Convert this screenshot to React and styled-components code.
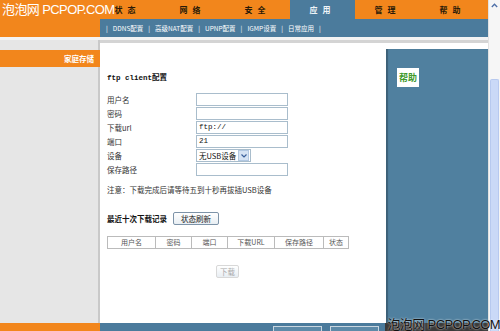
import { Fragment } from 'react'
import styled, { createGlobalStyle } from 'styled-components'

const ORANGE = '#f2861c'
const BLUE = '#4b7b9c'
const CJK = '"Noto Sans CJK SC", "Liberation Sans", sans-serif'

const Global = createGlobalStyle`
    html, body { margin: 0; padding: 0; background: #fff; }
    body { overflow: hidden; font-family: ${CJK}; }
`
const Page = styled.div`
    position: relative;
    display: flex;
    width: 500px;
    height: 331px;
    overflow: hidden;
`
const Main = styled.div`
    display: flex;
    flex-direction: column;
    width: 488px;
`
const Header = styled.div`
    display: flex;
    height: 19px;
    background: ${ORANGE};
`
const LogoSpace = styled.div`
    width: 95px;
`
const Tab = styled.div`
    width: 65px;
    display: flex;
    align-items: center;
    justify-content: center;
    font-size: 8px;
    font-weight: bold;
    letter-spacing: 5px;
    color: ${({ $active }) => ($active ? '#eef4f8' : '#2a1a08')};
    background: ${({ $active }) => ($active ? BLUE : 'transparent')};
`
const SubRow = styled.div`
    display: flex;
    height: 18px;
`
const SubLeft = styled.div`
    width: 100px;
    background: ${ORANGE};
`
const SubNav = styled.div`
    flex: 1;
    display: flex;
    align-items: center;
    gap: 5px;
    padding-left: 6px;
    background: ${BLUE};
    color: #fff;
    font-size: 6.5px;
`
const Strip = styled.div`
    height: 3px;
    background: #f3f3f3;
`
const Body = styled.div`
    flex: 1;
    display: flex;
`
const Sidebar = styled.div`
    width: 98px;
    padding-top: 10px;
    background: #e6e6e6;
    border-right: 2px solid #c9c9c9;
`
const SideItem = styled.div`
    height: 17px;
    background: ${ORANGE};
    color: #fff;
    font-size: 7.5px;
    font-weight: bold;
    display: flex;
    align-items: center;
    justify-content: flex-end;
    padding-right: 6px;
    margin-right: -2px;
`
const Work = styled.div`
    flex: 1;
    display: flex;
    flex-direction: column;
    border-top: 3px solid #d4d4d4;
`
const WorkRow = styled.div`
    flex: 1;
    display: flex;
`
const Content = styled.div`
    width: 279px;
    padding: 30px 0 0 7px;
    background: #fff;
    font-size: 7.5px;
    color: #333;
`
const Heading = styled.div`
    font-family: "Liberation Mono", ${CJK};
    font-weight: bold;
    font-size: 7.5px;
    height: 10px;
    line-height: 10px;
    margin-bottom: 10px;
    color: #111;
`
const Form = styled.div`
    display: grid;
    grid-template-columns: 89px 92px;
    row-gap: 1px;
`
const Label = styled.div`
    height: 13px;
    line-height: 13px;
`
const Input = styled.div`
    height: 11px;
    border: 1px solid #a9bdcc;
    background: #fff;
    font-size: 7.5px;
    line-height: 11px;
    padding-left: 2px;
    font-family: "Liberation Mono", monospace;
    color: #111;
`
const Select = styled.div`
    width: 51px;
    height: 11px;
    border: 1px solid #a9bdcc;
    display: flex;
    align-items: center;
    justify-content: space-between;
    padding-left: 2px;
    font-size: 7.5px;
    color: #111;
`
const Arrow = styled.div`
    width: 9px;
    height: 9px;
    margin-right: 1px;
    background: #d5e3f4;
    border: 1px solid #b2c8e2;
    display: flex;
    align-items: center;
    justify-content: center;
`
const Note = styled.div`
    margin-top: 9px;
    height: 10px;
    line-height: 10px;
`
const RecordRow = styled.div`
    display: flex;
    align-items: center;
    gap: 6px;
    margin-top: 17px;
`
const RecordTitle = styled.div`
    font-weight: bold;
    color: #111;
`
const Button = styled.div`
    height: 11px;
    padding: 0 ${({ $wide }) => ($wide ? 7 : 3)}px;
    border: 1px solid ${({ $disabled }) => ($disabled ? '#d8d8d8' : '#7d93a8')};
    border-radius: 2px;
    background: linear-gradient(#fff, #e8eef3);
    color: ${({ $disabled }) => ($disabled ? '#aaa' : '#222')};
    font-size: 7.5px;
    line-height: 11px;
`
const Table = styled.div`
    display: grid;
    grid-template-columns: 48px 36px 36px 47px 49px 25px;
    width: 241px;
    margin-top: 11px;
    border: 1px solid #bbb;
    border-right: none;
`
const Cell = styled.div`
    height: 11px;
    line-height: 11px;
    text-align: center;
    border-right: 1px solid #bbb;
    color: #555;
    font-size: 7px;
`
const Center = styled.div`
    display: flex;
    justify-content: center;
    width: 241px;
    margin-top: 16px;
`
const RightCol = styled.div`
    width: 102px;
    padding-top: 6px;
    background: #fff;
    display: flex;
    flex-direction: column;
`
const HelpPanel = styled.div`
    flex: 1;
    background: #50809f;
    box-shadow: inset 2px 0 1px rgba(0, 0, 0, 0.25);
    padding: 13px 0 0 11px;
`
const HelpTag = styled.div`
    display: inline-block;
    background: #fff;
    color: #3f9a2c;
    font-weight: bold;
    font-size: 9px;
    padding: 3px 2px;
`
const Footer = styled.div`
    display: flex;
    height: 8px;
`
const FootLeft = styled.div`
    width: 100px;
    background: ${ORANGE};
`
const FootBar = styled.div`
    flex: 1;
    display: flex;
    gap: 8px;
    padding: 3px 0 0 173px;
    background: ${BLUE};
`
const FootButton = styled.div`
    width: 47px;
    height: 8px;
    border: 1px solid #c9d6e0;
    border-bottom: none;
    background: #5d8aa8;
`
const Scrollbar = styled.div`
    width: 12px;
    display: flex;
    flex-direction: column;
    background: #f6f6f6;
    border-left: 1px solid #e2e2e2;
`
const ScrollUp = styled.div`
    height: 10px;
    display: flex;
    align-items: center;
    justify-content: center;
`
const Thumb = styled.div`
    flex: 1;
    margin: 69px 1px 0 1px;
    background: #cad9f7;
    border: 1px solid #b7c9ef;
    border-bottom: none;
    border-radius: 2px 2px 0 0;
`
const Watermark = styled.div`
    position: absolute;
    font-family: "Liberation Sans", ${CJK};
    font-size: 13px;
    letter-spacing: -0.6px;
    white-space: nowrap;
    color: ${({ $dark }) => ($dark ? '#111' : '#fff')};
    text-shadow: ${({ $dark }) => ($dark ? '0 0 2px #fff' : 'none')};
    ${({ $dark }) => ($dark ? 'right: 0; bottom: -2px;' : 'left: 2px; top: -1px;')}
`
const WatermarkBand = styled.div`
    position: absolute;
    right: 12px;
    bottom: 0;
    width: 103px;
    height: 8px;
    background: #3a3a3a;
`

const tabs = ['状态', '网络', '安全', '应用', '管理', '帮助']
const subItems = ['DDNS配置', '高级NAT配置', 'UPNP配置', 'IGMP设置', '日常应用']
const columns = ['用户名', '密码', '端口', '下载URL', '保存路径', '状态']

export default function App() {
    return (
        <>
            <Global />
            <Page>
                <Main>
                    <Header>
                        <LogoSpace />
                        {tabs.map((t) => (
                            <Tab key={t} $active={t === '应用'}>{t}</Tab>
                        ))}
                    </Header>
                    <SubRow>
                        <SubLeft />
                        <SubNav>
                            <span>|</span>
                            {subItems.map((s) => (
                                <Fragment key={s}>
                                    <span>{s}</span>
                                    <span>|</span>
                                </Fragment>
                            ))}
                        </SubNav>
                    </SubRow>
                    <Strip />
                    <Body>
                        <Sidebar>
                            <SideItem>家庭存储</SideItem>
                        </Sidebar>
                        <Work>
                            <WorkRow>
                                <Content>
                                    <Heading>ftp client配置</Heading>
                                    <Form>
                                        <Label>用户名</Label>
                                        <Input />
                                        <Label>密码</Label>
                                        <Input />
                                        <Label>下载url</Label>
                                        <Input>ftp://</Input>
                                        <Label>端口</Label>
                                        <Input>21</Input>
                                        <Label>设备</Label>
                                        <Select>
                                            无USB设备
                                            <Arrow>
                                                <svg width="6" height="4" viewBox="0 0 6 4">
                                                    <path d="M0.5 0.5 L3 3 L5.5 0.5" fill="none" stroke="#3a5f9a" strokeWidth="1.2" />
                                                </svg>
                                            </Arrow>
                                        </Select>
                                        <Label>保存路径</Label>
                                        <Input />
                                    </Form>
                                    <Note>注意：下载完成后请等待五到十秒再拔插USB设备</Note>
                                    <RecordRow>
                                        <RecordTitle>最近十次下载记录</RecordTitle>
                                        <Button $wide>状态刷新</Button>
                                    </RecordRow>
                                    <Table>
                                        {columns.map((c) => (
                                            <Cell key={c}>{c}</Cell>
                                        ))}
                                    </Table>
                                    <Center>
                                        <Button $disabled>下载</Button>
                                    </Center>
                                </Content>
                                <RightCol>
                                    <HelpPanel>
                                        <HelpTag>帮助</HelpTag>
                                    </HelpPanel>
                                </RightCol>
                            </WorkRow>
                        </Work>
                    </Body>
                    <Footer>
                        <FootLeft />
                        <FootBar>
                            <FootButton />
                            <FootButton />
                        </FootBar>
                    </Footer>
                </Main>
                <Scrollbar>
                    <ScrollUp>
                        <svg width="7" height="5" viewBox="0 0 7 5">
                            <path d="M0.8 4 L3.5 1.2 L6.2 4" fill="none" stroke="#4d6fa8" strokeWidth="1.3" />
                        </svg>
                    </ScrollUp>
                    <Thumb />
                </Scrollbar>
                <Watermark>泡泡网 PCPOP.COM</Watermark>
                <WatermarkBand />
                <Watermark $dark>泡泡网  PCPOP.COM</Watermark>
            </Page>
        </>
    )
}
